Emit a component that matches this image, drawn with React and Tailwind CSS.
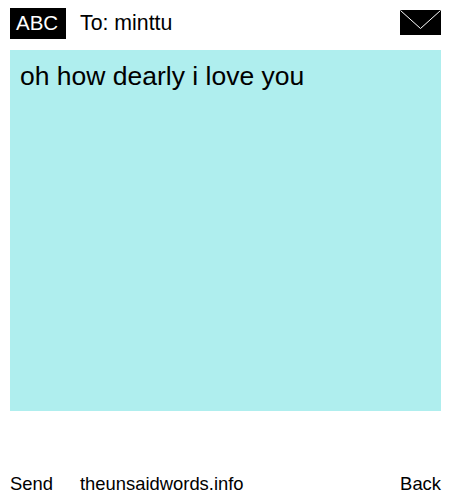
import React from 'react';

function EnvelopeIcon() {
    return (
        <svg width="41" height="25" viewBox="0 0 41 25" className="block">
            <rect width="41" height="25" fill="#000" />
            <path d="M0.5 0.5 L20.5 18.5 L40.5 0.5" fill="none" stroke="#fff" strokeWidth="1" />
        </svg>
    );
}

export default function App() {
    return (
        <div className="w-[450px] h-[500px] bg-white text-black pl-[10px] pr-[9px] font-['Liberation_Sans',Arial,sans-serif]">
            <div className="flex items-start justify-between pt-[8px] h-[50px]">
                <div className="flex items-center">
                    <div className="w-[56px] h-[31px] bg-black text-white text-[20.5px] leading-[30px] pl-[6px]">ABC</div>
                    <div className="ml-[14px] text-[21.3px] leading-[31px]">To: minttu</div>
                </div>
                <div className="mt-[2px]">
                    <EnvelopeIcon />
                </div>
            </div>
            <div className="h-[361px] bg-[#afeeee] px-[10px] py-[10px] text-[26.5px] leading-[32px]">
                oh how dearly i love you
            </div>
            <div className="flex justify-between mt-[61px] text-[18.4px] leading-[24px]">
                <div className="flex">
                    <span className="w-[70px]">Send</span>
                    <span>theunsaidwords.info</span>
                </div>
                <span>Back</span>
            </div>
        </div>
    );
}
